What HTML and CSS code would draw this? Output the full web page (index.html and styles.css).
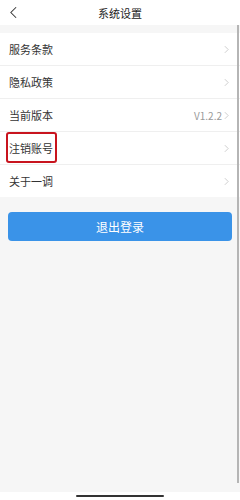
FILE: index.html
```html
<!DOCTYPE html>
<html lang="zh">
  <head>
    <meta charset="UTF-8" />
    <title>系统设置</title>
    <meta name="viewport" content="width=device-width, initial-scale=1.0" />
    <link rel="stylesheet" href="styles.css">
  </head>
  <body>
    <div class="screen">
      <header class="navbar">
        <span class="back">
          <svg viewBox="0 0 8 14" width="7" height="13">
            <polyline points="7,1 1,7 7,13" />
          </svg>
        </span>
        <h1>系统设置</h1>
        <span></span>
      </header>

      <ul class="menu">
        <li class="item">
          <span>服务条款</span>
          <svg class="arrow" viewBox="0 0 6 10"><polyline points="1,1 5,5 1,9" /></svg>
        </li>
        <li class="item">
          <span>隐私政策</span>
          <svg class="arrow" viewBox="0 0 6 10"><polyline points="1,1 5,5 1,9" /></svg>
        </li>
        <li class="item">
          <span>当前版本</span>
          <span class="extra">V1.2.2
            <svg class="arrow" viewBox="0 0 6 10"><polyline points="1,1 5,5 1,9" /></svg>
          </span>
        </li>
        <li class="item">
          <span>注销账号</span>
          <svg class="arrow" viewBox="0 0 6 10"><polyline points="1,1 5,5 1,9" /></svg>
          <span class="mark"></span>
        </li>
        <li class="item">
          <span>关于一调</span>
          <svg class="arrow" viewBox="0 0 6 10"><polyline points="1,1 5,5 1,9" /></svg>
        </li>
      </ul>

      <button class="logout" type="button">退出登录</button>

      <div class="fill"></div>
      <div class="homebar"><span></span></div>
      <div class="scroll"></div>
    </div>
  </body>
</html>
```

FILE: styles.css
```css
body {
  margin: 0;
  font-family: "Noto Sans CJK SC", "Noto Sans", sans-serif;
  color: #333;
}

.screen {
  position: relative;
  height: 500px;
  display: flex;
  flex-direction: column;
  background: #f6f6f6;
}

.navbar {
  height: 25px;
  background: #fff;
  display: grid;
  grid-template-columns: 40px 1fr 40px;
  align-items: center;
}

.navbar h1 {
  margin: 0;
  font-size: 11px;
  font-weight: normal;
  text-align: center;
  color: #222;
}

.back {
  padding-left: 10px;
  display: flex;
  align-items: center;
}

.back svg {
  fill: none;
  stroke: #333;
  stroke-width: 1.2;
}

.menu {
  list-style: none;
  margin: 8px 0 0;
  padding: 0;
  background: #fff;
}

.item {
  position: relative;
  height: 32px;
  padding: 0 11px 0 9px;
  display: flex;
  align-items: center;
  justify-content: space-between;
  font-size: 11px;
  border-bottom: 1px solid #efefef;
}

.item:last-child {
  border-bottom: none;
}

.extra {
  display: flex;
  align-items: center;
  gap: 2px;
  color: #999;
  font-size: 10px;
}

.arrow {
  width: 5px;
  height: 9px;
  fill: none;
  stroke: #c4c4c4;
  stroke-width: 1;
}

.mark {
  position: absolute;
  left: 6px;
  top: 0;
  width: 47px;
  height: 27px;
  border: 2px solid #c8141e;
  border-radius: 3px;
}

.logout {
  margin: 15px 8px 0;
  height: 29px;
  border: none;
  border-radius: 4px;
  background: #3a93e8;
  color: #fff;
  font-family: inherit;
  font-size: 12px;
}

.fill {
  flex: 1;
}

.homebar {
  height: 8px;
  background: #fff;
  display: flex;
  justify-content: center;
  align-items: center;
}

.homebar span {
  width: 88px;
  height: 2px;
  border-radius: 1px;
  background: #333;
}

.scroll {
  position: absolute;
  right: 1px;
  top: 25px;
  bottom: 17px;
  width: 2px;
  background: #b5b5b5;
}
```
